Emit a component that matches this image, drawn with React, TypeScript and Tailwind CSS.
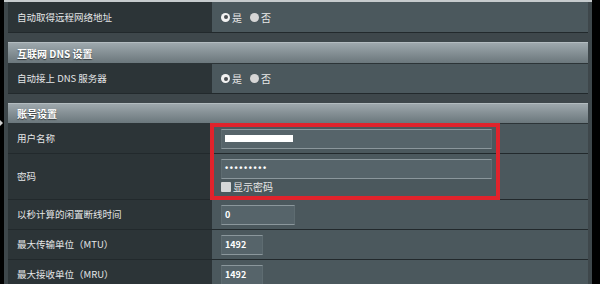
const font = { fontFamily: '"Noto Sans CJK SC", "Liberation Sans", sans-serif' };

function Radio({ checked }: { checked: boolean }) {
    return checked ? (
        <span className="flex h-[9px] w-[9px] items-center justify-center rounded-full bg-[#f2f2f2]">
            <span className="h-[4px] w-[4px] rounded-full bg-[#4a4f52]" />
        </span>
    ) : (
        <span className="h-[9px] w-[9px] rounded-full bg-[#d6d6d6]" />
    );
}

function YesNo() {
    return (
        <div className="flex items-center text-[10px] text-[#e8e8e8]">
            <Radio checked />
            <span className="ml-[2px]">是</span>
            <span className="ml-[8px]" />
            <Radio checked={false} />
            <span className="ml-[2px]">否</span>
        </div>
    );
}

function Row({ label, h = 'h-[30px]', children }: { label: string; h?: string; children: React.ReactNode }) {
    return (
        <div className={`flex ${h} border-b border-[#22292c]`}>
            <div className="flex w-[204px] items-center bg-[#2c3437] pl-[9px] text-[9.5px] text-[#e4e6e7]">{label}</div>
            <div className="flex flex-1 items-center bg-[#4b585d] pl-[9px]">{children}</div>
        </div>
    );
}

function Header({ title, h }: { title: string; h: string }) {
    return (
        <div className={`flex ${h} items-center border-y border-t-[#b3bcc0] border-b-[#2c3437] bg-gradient-to-b from-[#9ea8ad] to-[#6b777c] pl-[9px] text-[10px] font-bold text-white [text-shadow:0_1px_1px_rgba(0,0,0,0.6)]`}>
            {title}
        </div>
    );
}

function Field({ w, children }: { w: string; children?: React.ReactNode }) {
    return (
        <div className={`flex h-[20px] ${w} items-center border border-[#5e6c71] border-y-[#8b979c] bg-[#56646a] pl-[3px] text-[9px] font-bold text-white`}>
            {children}
        </div>
    );
}

export default function App() {
    return (
        <div className="relative h-[284px] w-[600px] overflow-hidden bg-black" style={font}>
            <div className="ml-[4px] w-[588px] bg-[#3e474b] px-[4px]">
                <div className="-mx-[4px] h-[2px] bg-[#c6cbcd]" />
                <Row label="自动取得远程网络地址" h="h-[31px]">
                    <YesNo />
                </Row>
                <div className="h-[9px]" />
                <Header title="互联网 DNS 设置" h="h-[22px]" />
                <Row label="自动接上 DNS 服务器">
                    <YesNo />
                </Row>
                <div className="h-[9px]" />
                <Header title="账号设置" h="h-[21px]" />
                <Row label="用户名称">
                    <Field w="w-[271px]">
                        <span className="h-[7px] w-[68px] bg-white" />
                    </Field>
                </Row>
                <div className="flex h-[46px] border-b border-[#22292c]">
                    <div className="flex w-[204px] items-center bg-[#2c3437] pl-[9px] text-[9.5px] text-[#e4e6e7]">密码</div>
                    <div className="flex-1 bg-[#4b585d] pl-[9px] pt-[5px]">
                        <Field w="w-[271px]">
                            <span className="font-['Liberation_Sans',sans-serif] tracking-[1.6px]">•••••••••</span>
                        </Field>
                        <div className="mt-[2px] flex items-center text-[10px] text-[#e8e8e8]">
                            <span className="h-[10px] w-[10px] rounded-[1px] bg-[#d4d6d7]" />
                            <span className="ml-[2px] leading-[12px]">显示密码</span>
                        </div>
                    </div>
                </div>
                <Row label="以秒计算的闲置断线时间">
                    <Field w="w-[74px]">0</Field>
                </Row>
                <Row label="最大传输单位（MTU）">
                    <Field w="w-[42px]">1492</Field>
                </Row>
                <Row label="最大接收单位（MRU）">
                    <Field w="w-[42px]">1492</Field>
                </Row>
            </div>
            <div className="absolute left-[210px] top-[123px] h-[77px] w-[290px] border-[4px] border-[#e0232c]" />
            <div className="absolute left-0 top-[120px] h-0 w-0 border-y-[3px] border-l-[3px] border-y-transparent border-l-[#d0d0d0]" />
        </div>
    );
}
